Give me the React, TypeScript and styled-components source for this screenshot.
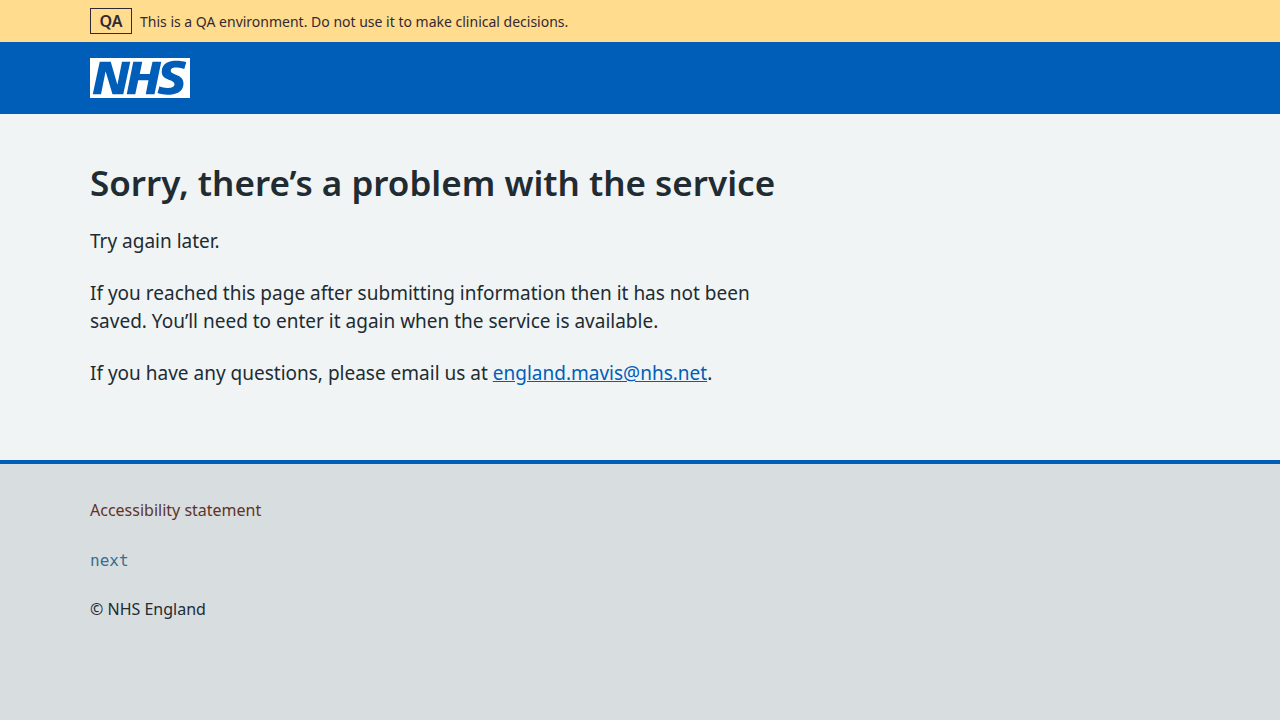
import React from "react";
import styled, { createGlobalStyle } from "styled-components";

const GlobalStyle = createGlobalStyle`
  *, *::before, *::after { box-sizing: border-box; }
  html { background: #d8dde0; }
  body {
    margin: 0;
    color: #212b32;
    background: #d8dde0;
    font-family: "Noto Sans", "Open Sans", sans-serif;
    font-size: 19px;
    line-height: 28px;
  }
`;

const Container = styled.div`
  max-width: 1164px;
  margin: 0 auto;
  padding: 0 32px;
`;

const EnvironmentBanner = styled.aside`
  padding: 8px 0;
  background: #ffdc8e;
  color: #342933;
`;

const BannerRow = styled(Container)`
  display: flex;
  align-items: baseline;
  gap: 8px;
  font-size: 14px;
  line-height: 24px;
`;

const Tag = styled.strong`
  min-width: 42px;
  padding: 0 8px;
  border: 1px solid #342933;
  font-size: 16px;
  font-weight: 600;
  text-align: center;
`;

const Header = styled.header`
  padding: 16px 0;
  background: #005eb8;
`;

const LogoLink = styled.a`
  display: block;
  width: 100px;
  height: 40px;
  color: #ffffff;
`;

const Main = styled.main`
  padding: 48px 0 49px;
  background: #f0f4f5;
`;

const Article = styled.div`
  max-width: 710px;
`;

const Heading = styled.h1`
  margin: 0 0 24px;
  font-size: 35px;
  font-weight: 600;
  line-height: 41px;
`;

const Paragraph = styled.p`
  margin: 0 0 24px;
`;

const EmailLink = styled.a`
  color: #005eb8;
  text-decoration: underline;
`;

const Footer = styled.footer`
  padding: 32px 0;
  border-top: 4px solid #005eb8;
  font-size: 16px;
  line-height: 28px;
`;

const FooterLink = styled.a`
  color: #5f3426;
  text-decoration: none;
`;

const Release = styled.p`
  margin: 0 0 24px;
  color: #3b6d8e;
  font-family: "DejaVu Sans Mono", monospace;
  line-height: 26px;
`;

const Copyright = styled.p`
  margin: 0;
  line-height: 22px;
`;

const NhsLogo = () => (
  <svg viewBox="0 0 200 80" width="100" height="40" display="block" role="img" aria-label="NHS">
    <path
      fill="currentColor"
      d="M200 0v80H0V0h200Zm-27.5 5.5c-14.5 0-29 5-29 22 0 10.2 7.7 13.5 14.7 16.3l.7.3c5.4 2 10.1 3.9 10.1 8.4 0 6.5-8.5 7.5-14 7.5s-12.5-1.5-16-3.5L135 70c5.5 2 13.5 3.5 20 3.5 15.5 0 32-4.5 32-22.5 0-19.5-25.5-16.5-25.5-25.5 0-5.5 5.5-6.5 12.5-6.5a35 35 0 0 1 14.5 3l4-13.5c-4.5-2-12-3-20-3Zm-131 2h-22l-14 65H22l9-45h.5l13.5 45h21.5l14-65H64l-9 45h-.5l-13-45Zm63 0h-18l-13 65h17l6-28H117l-5.5 28H129l13.5-65H125L119.5 32h-20l5-24.5Z"
    />
  </svg>
);

export default function App() {
  return (
    <>
      <GlobalStyle />
      <EnvironmentBanner>
        <BannerRow>
          <Tag>QA</Tag>
          <span>This is a QA environment. Do not use it to make clinical decisions.</span>
        </BannerRow>
      </EnvironmentBanner>
      <Header>
        <Container>
          <LogoLink href="/">
            <NhsLogo />
          </LogoLink>
        </Container>
      </Header>
      <Main>
        <Container>
          <Article>
            <Heading>Sorry, there’s a problem with the service</Heading>
            <Paragraph>Try again later.</Paragraph>
            <Paragraph>
              If you reached this page after submitting information then it has not been saved. You’ll
              need to enter it again when the service is available.
            </Paragraph>
            <Paragraph>
              If you have any questions, please email us at{" "}
              <EmailLink href="mailto:england.mavis@nhs.net">england.mavis@nhs.net</EmailLink>.
            </Paragraph>
          </Article>
        </Container>
      </Main>
      <Footer>
        <Container>
          <Paragraph>
            <FooterLink href="/accessibility-statement">Accessibility statement</FooterLink>
          </Paragraph>
          <Release>next</Release>
          <Copyright>© NHS England</Copyright>
        </Container>
      </Footer>
    </>
  );
}
